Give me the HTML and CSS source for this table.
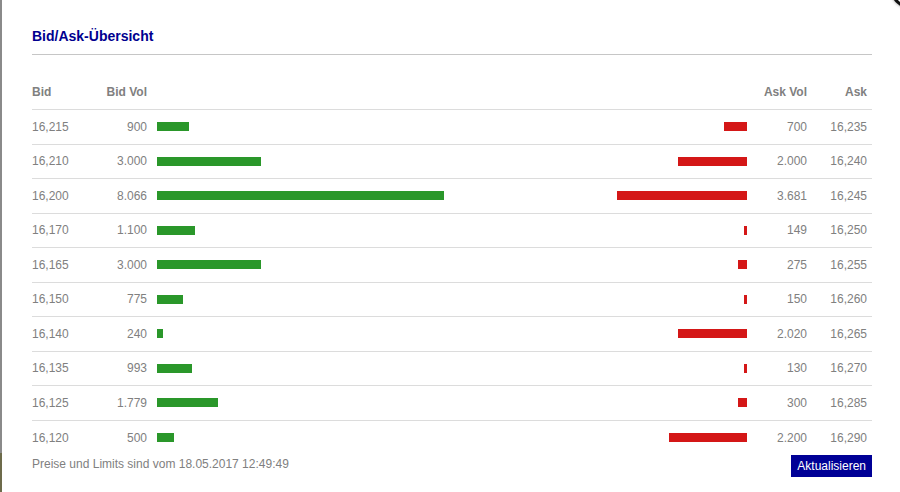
FILE: index.html
```html
<!DOCTYPE html>
<html lang="de">
<head>
  <meta charset="UTF-8">
  <title>Bid/Ask-Übersicht</title>
  <link rel="stylesheet" href="styles.css">
</head>
<body>

<div class="page">
  <div class="edge"></div>

  <div class="modal">
    <span class="close"></span>

    <h2 class="title">Bid/Ask-Übersicht</h2>

    <div class="book">
      <div class="row head">
        <div>Bid</div>
        <div class="num">Bid Vol</div>
        <div class="bars"></div>
        <div class="num">Ask Vol</div>
        <div class="num">Ask</div>
      </div>

      <div class="row">
        <div>16,215</div><div class="num">900</div>
        <div class="bars"><span class="bar bid" style="width:32px"></span><span class="bar ask" style="width:23px"></span></div>
        <div class="num">700</div><div class="num">16,235</div>
      </div>
      <div class="row">
        <div>16,210</div><div class="num">3.000</div>
        <div class="bars"><span class="bar bid" style="width:104px"></span><span class="bar ask" style="width:69px"></span></div>
        <div class="num">2.000</div><div class="num">16,240</div>
      </div>
      <div class="row">
        <div>16,200</div><div class="num">8.066</div>
        <div class="bars"><span class="bar bid" style="width:287px"></span><span class="bar ask" style="width:130px"></span></div>
        <div class="num">3.681</div><div class="num">16,245</div>
      </div>
      <div class="row">
        <div>16,170</div><div class="num">1.100</div>
        <div class="bars"><span class="bar bid" style="width:38px"></span><span class="bar ask" style="width:3px"></span></div>
        <div class="num">149</div><div class="num">16,250</div>
      </div>
      <div class="row">
        <div>16,165</div><div class="num">3.000</div>
        <div class="bars"><span class="bar bid" style="width:104px"></span><span class="bar ask" style="width:9px"></span></div>
        <div class="num">275</div><div class="num">16,255</div>
      </div>
      <div class="row">
        <div>16,150</div><div class="num">775</div>
        <div class="bars"><span class="bar bid" style="width:26px"></span><span class="bar ask" style="width:3px"></span></div>
        <div class="num">150</div><div class="num">16,260</div>
      </div>
      <div class="row">
        <div>16,140</div><div class="num">240</div>
        <div class="bars"><span class="bar bid" style="width:6px"></span><span class="bar ask" style="width:69px"></span></div>
        <div class="num">2.020</div><div class="num">16,265</div>
      </div>
      <div class="row">
        <div>16,135</div><div class="num">993</div>
        <div class="bars"><span class="bar bid" style="width:35px"></span><span class="bar ask" style="width:3px"></span></div>
        <div class="num">130</div><div class="num">16,270</div>
      </div>
      <div class="row">
        <div>16,125</div><div class="num">1.779</div>
        <div class="bars"><span class="bar bid" style="width:61px"></span><span class="bar ask" style="width:9px"></span></div>
        <div class="num">300</div><div class="num">16,285</div>
      </div>
      <div class="row">
        <div>16,120</div><div class="num">500</div>
        <div class="bars"><span class="bar bid" style="width:17px"></span><span class="bar ask" style="width:78px"></span></div>
        <div class="num">2.200</div><div class="num">16,290</div>
      </div>
    </div>

    <div class="footer">
      <span class="stamp">Preise und Limits sind vom 18.05.2017 12:49:49</span>
      <button class="refresh">Aktualisieren</button>
    </div>
  </div>
</div>

</body>
</html>
```

FILE: styles.css
```css
html, body {
  margin: 0;
  height: 100%;
  background: #fff;
  overflow: hidden;
}
body {
  font-family: "Liberation Sans", Arial, sans-serif;
  font-size: 12px;
  color: #808080;
}
.page {
  display: flex;
  height: 492px;
}
.edge {
  width: 2px;
  flex: none;
  background: linear-gradient(#8a8a8a 0, #8a8a8a 453px, #6d6b4b 453px);
}
.modal {
  flex: 1;
  position: relative;
  padding: 0 28px 0 30px;
}
.close {
  position: absolute;
  top: -28px;
  right: -27px;
  width: 30px;
  height: 30px;
  border: 3px solid #111;
  border-radius: 50%;
  background: #fff;
  box-shadow: 0 0 3px rgba(0, 0, 0, 0.5);
}
.title {
  margin: 0;
  padding: 28px 0 10px 0;
  font-size: 14px;
  line-height: 16px;
  font-weight: bold;
  color: #00008f;
  border-bottom: 1px solid #c6c6c6;
}
.book {
  margin-top: 20px;
}
.row {
  display: grid;
  grid-template-columns: 60px 55px 1fr 60px 60px;
  align-items: center;
  height: 33.5px;
  padding-right: 5px;
  border-bottom: 1px solid #dcdcdc;
}
.row:last-child {
  border-bottom: none;
  height: 34px;
}
.row.head {
  height: 34px;
  font-weight: bold;
}
.num {
  text-align: right;
}
.bars {
  display: flex;
  justify-content: space-between;
  align-items: center;
  padding-left: 10px;
}
.bar {
  display: block;
  height: 9px;
}
.bar.bid {
  background: #2a972a;
}
.bar.ask {
  background: #d41717;
}
.footer {
  display: flex;
  justify-content: space-between;
  align-items: flex-start;
}
.stamp {
  line-height: 14px;
  padding-top: 2px;
}
.refresh {
  font-family: "Liberation Sans", Arial, sans-serif;
  font-size: 12px;
  line-height: 22px;
  height: 22px;
  padding: 0 6px;
  border: none;
  border-radius: 0;
  background: #000096;
  color: #fff;
  cursor: pointer;
}
```
